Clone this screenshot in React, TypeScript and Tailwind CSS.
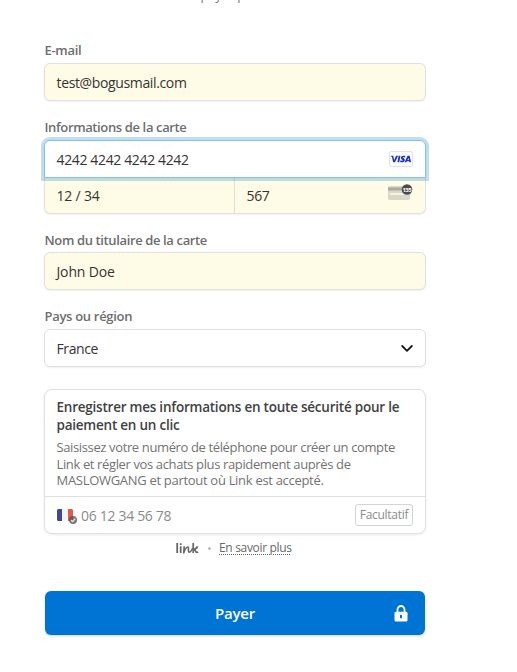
import type { ReactNode } from "react";

function Label({ children, className }: { children: ReactNode; className: string }) {
  return (
    <div className={`h-4 pl-[0.5px] whitespace-nowrap text-[13px] leading-4 font-semibold text-[#6d6d6d] ${className}`}>
      {children}
    </div>
  );
}

const field =
  "flex h-[38px] items-center rounded-md border border-[#e0e0e0] pr-3 pl-[11.5px] text-[14px] text-[#343434] shadow-[0_1px_2px_rgba(0,0,0,0.06)]";

function VisaIcon() {
  return (
    <svg width="24" height="16" viewBox="0 0 24 16">
      <rect x="0.5" y="0.5" width="23" height="15" rx="1.5" fill="#fff" stroke="#e2e2ea" />
      <g fill="#1a34c8">
        <path d="M1.800 4.800h2.500l.8 4.200 2-4.200h2L6 11.200H4.100L3 6.100 1.800 5.200z" />
        <path d="M9.600 4.800h1.900l-1.200 6.400H8.400z" />
        <path d="M16.400 5l-.4 1.500c-1-.5-2.200-.5-2.200 0 0 .6 2 .8 2 2.400 0 2.200-2.600 2.700-4.700 2l.4-1.600c1 .6 2.400.6 2.400 0 0-.7-2-.7-2-2.400 0-2.100 2.500-2.600 4.500-1.900z" />
        <path fillRule="evenodd" d="M18.600 4.800h2l1.500 6.400h-1.700l-.2-1h-2.300l-.5 1h-1.900zM19.500 6.900l-1 2h1.400z" />
      </g>
    </svg>
  );
}

function CvcIcon() {
  return (
    <svg width="26" height="18" viewBox="0 0 26 18">
      <rect x="1" y="3" width="22" height="14" rx="1.8" fill="#d9d8c7" />
      <path d="M1 4.500h22v3H1z" fill="#aaa99c" />
      <rect x="3" y="10" width="17" height="2" fill="#f4f3e2" />
      <circle cx="20" cy="6.500" r="5.300" fill="#4b4b49" />
      <text x="19.800" y="8.700" textAnchor="middle" fontSize="6" fontWeight="700" fill="#fff" fontFamily="Open Sans, sans-serif" letterSpacing="-0.500">
        135
      </text>
    </svg>
  );
}

function FlagIcon() {
  return (
    <svg width="21" height="17" viewBox="0 0 21 17">
      <rect x="0" y="2" width="16" height="12" rx="1.500" fill="#f3f3f6" />
      <path d="M1.500 2H5v12H1.500A1.500 1.500 0 0 1 0 12.500v-9A1.500 1.500 0 0 1 1.500 2z" fill="#43478d" />
      <path d="M11 2h3.500A1.500 1.500 0 0 1 16 3.500v9a1.500 1.500 0 0 1-1.500 1.500H11z" fill="#e4594d" />
      <circle cx="16" cy="13" r="4" fill="#555" fillOpacity="0.780" />
      <path d="M14 13l1.600 1.500 2.600-2.900" fill="none" stroke="#e3e3e3" strokeWidth="1.300" />
    </svg>
  );
}

function LinkLogo() {
  return (
    <svg width="23" height="11" viewBox="0 0 23 11" fill="none" stroke="#686868" strokeWidth="1.800" strokeLinejoin="round">
      <path d="M1.200 0v10M4.700 3.200V10M4.700 .2v1.800" />
      <path d="M8.200 3.200L7.700 10C8.900 6.500 10.200 4 11.800 4c1.500 0-.2 5.200 1.300 5.200 1.300 0 2.700-2.200 3.600-4.200" strokeWidth="1.600" />
      <path d="M17.200 0v10M21.600 3.400c-.8 2-2.300 3-4.400 3.200 1.600-.2 2.200.6 2.500 1.700.3 1.200 1.200 1.300 2.600.7" strokeWidth="1.700" />
    </svg>
  );
}

export default function App() {
  return (
    <div className="h-[672px] w-[517px] overflow-hidden bg-white pl-11 font-['Open_Sans','Noto_Sans',sans-serif]">
      <div className="flex w-[382px] flex-col">
        <div className="-mt-[14px] h-[18px] text-center text-[13px] leading-[18px] tracking-[-0.15px] text-[#777]">Ou payer par carte</div>

        <Label className="mt-[38px] tracking-[-0.3px]">E-mail</Label>
        <div className={`${field} mt-[5px] bg-[#fefce6] tracking-[-0.36px]`}>test@bogusmail.com</div>

        <Label className="mt-[18px] tracking-[-0.37px]">Informations de la carte</Label>
        <div className="mt-[5px] flex h-[74px] flex-col rounded-md text-[14px] text-[#343434] shadow-[0_1px_2px_rgba(0,0,0,0.06)]">
          <div className="z-10 flex h-[38px] items-center justify-between rounded-t-md border border-[#87bfe4] bg-white pr-3 pl-[11.5px] tracking-[-0.36px] shadow-[0_0_0_3px_rgba(0,125,200,0.25)]">
            <span>4242 4242 4242 4242</span>
            <VisaIcon />
          </div>
          <div className="flex h-9 rounded-b-md border border-t-0 border-[#e0e0e0] bg-[#fefce6]">
            <div className="flex w-[190px] items-center border-r border-[#e0e0e0] pl-[11.5px] tracking-[-0.2px]">12 / 34</div>
            <div className="flex flex-1 items-center justify-between pr-3 pl-[11.5px]">
              <span className="tracking-[-0.35px]">567</span>
              <span className="-mt-[7px]"><CvcIcon /></span>
            </div>
          </div>
        </div>

        <Label className="mt-[18px] tracking-[-0.37px]">Nom du titulaire de la carte</Label>
        <div className={`${field} mt-1 bg-[#fefce6] tracking-[-0.15px]`}>John Doe</div>

        <Label className="mt-[18px] tracking-[-0.3px]">Pays ou région</Label>
        <div className={`${field} mt-[5px] justify-between bg-white`}>
          <span className="tracking-[-0.4px]">France</span>
          <svg width="12" height="8" viewBox="0 0 12 8" fill="none" stroke="#1a1a1a" strokeWidth="1.800" strokeLinecap="round" strokeLinejoin="round">
            <path d="M1.200 2l4.800 4.800L10.800 2" />
          </svg>
        </div>

        <div className="mt-[22px] flex h-[145px] flex-col rounded-lg border border-[#e0e0e0] bg-white shadow-[0_1px_3px_rgba(0,0,0,0.08)]">
          <div className="h-[107px] border-b border-[#e0e0e0] pt-2 pl-[11.5px] whitespace-nowrap">
            <div className="text-[13.5px] leading-[18px] font-semibold text-[#414141]">
              <div className="tracking-[-0.23px]">Enregistrer mes informations en toute sécurité pour le</div>
              <div className="tracking-[-0.23px]">paiement en un clic</div>
            </div>
            <div className="mt-[5px] text-[13px] leading-[16.5px] text-[#737373]">
              <div className="tracking-[-0.37px]">Saisissez votre numéro de téléphone pour créer un compte</div>
              <div className="tracking-[-0.37px]">Link et régler vos achats plus rapidement auprès de</div>
              <div className="tracking-[-0.3px]">MASLOWGANG et partout où Link est accepté.</div>
            </div>
          </div>
          <div className="flex flex-1 items-center px-3">
            <FlagIcon />
            <span className="ml-[3px] text-[14px] tracking-[-0.31px] text-[#8b8b8b]">06 12 34 56 78</span>
            <span className="ml-auto flex h-[22px] w-[58px] items-center justify-center rounded-[3px] border border-[#d4d4d4] text-[12px] tracking-[-0.3px] text-[#8b8b8b]">Facultatif</span>
          </div>
        </div>

        <div className="mt-1.5 flex h-4 items-center pl-[132px] text-[12px] leading-4 whitespace-nowrap text-[#686868]">
          <LinkLogo />
          <span className="ml-[9px] h-[3px] w-[3px] rounded-full bg-[#bbb]" />
          <span className="ml-[8px] tracking-[-0.32px] underline decoration-dotted decoration-1 underline-offset-2">En savoir plus</span>
        </div>

        <button className="mt-[35px] ml-px grid h-11 w-[380px] grid-cols-[1fr_auto_1fr] items-center rounded-md bg-[#0074d4] px-[17px] text-[15px] font-semibold text-white shadow-[0_1px_3px_rgba(0,0,0,0.16)]">
          <span />
          <span className="tracking-[-0.2px]">Payer</span>
          <svg className="justify-self-end" width="14" height="17" viewBox="0 0 14 17">
            <path d="M3.500 7V4.500a3.500 3.500 0 0 1 7 0V7" fill="none" stroke="#fff" strokeWidth="1.800" />
            <rect x="0.500" y="6.800" width="13" height="9.700" rx="1.500" fill="#fff" />
            <rect x="6" y="9.800" width="2" height="3.500" rx="0.500" fill="#0074d4" />
          </svg>
        </button>
      </div>
    </div>
  );
}
